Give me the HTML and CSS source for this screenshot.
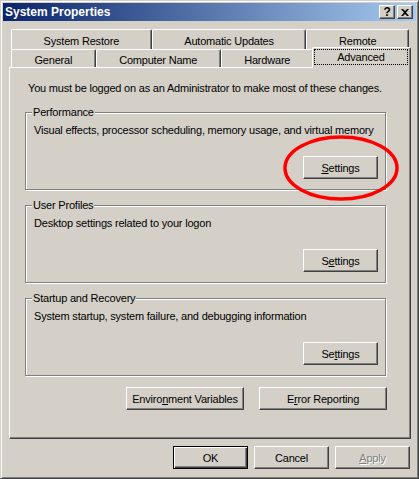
FILE: index.html
```html
<!DOCTYPE html>
<html lang="en">
<head>
    <meta charset="UTF-8">
    <title>System Properties</title>
    <link rel="stylesheet" href="styles.css">
</head>
<body>
    <div class="window">
        <div class="titlebar">
            <span class="title">System Properties</span>
            <div class="caption-buttons">
                <span class="cap-btn help">?</span>
                <span class="cap-btn close">
                    <svg width="8" height="7" viewBox="0 0 8 7"><path d="M0 0h2l2 2 2-2h2L5 3.5 8 7H6L4 5 2 7H0l3-3.5z" fill="#000"/></svg>
                </span>
            </div>
        </div>
        <div class="client">
            <div class="tabs">
                <div class="tab-row back">
                    <div class="tab">System Restore</div>
                    <div class="tab">Automatic Updates</div>
                    <div class="tab">Remote</div>
                </div>
                <div class="tab-row front">
                    <div class="tab">General</div>
                    <div class="tab">Computer Name</div>
                    <div class="tab">Hardware</div>
                    <div class="tab selected"><span class="focus">Advanced</span></div>
                </div>
            </div>
            <div class="panel">
                <p class="intro">You must be logged on as an Administrator to make most of these changes.</p>
                <fieldset class="group">
                    <legend>Performance</legend>
                    <p>Visual effects, processor scheduling, memory usage, and virtual memory</p>
                    <div class="group-actions">
                        <button type="button"><u>S</u>ettings</button>
                    </div>
                </fieldset>
                <fieldset class="group">
                    <legend>User Profiles</legend>
                    <p>Desktop settings related to your logon</p>
                    <div class="group-actions">
                        <button type="button">S<u>e</u>ttings</button>
                    </div>
                </fieldset>
                <fieldset class="group">
                    <legend>Startup and Recovery</legend>
                    <p>System startup, system failure, and debugging information</p>
                    <div class="group-actions">
                        <button type="button">Se<u>t</u>tings</button>
                    </div>
                </fieldset>
                <div class="panel-actions">
                    <button type="button" class="wide">Enviro<u>n</u>ment Variables</button>
                    <button type="button" class="wider">E<u>r</u>ror Reporting</button>
                </div>
            </div>
            <div class="dialog-actions">
                <button type="button" class="default">OK</button>
                <button type="button">Cancel</button>
                <button type="button" class="disabled"><u>A</u>pply</button>
            </div>
        </div>
        <svg class="highlight" width="120" height="70" viewBox="0 0 120 70">
            <ellipse cx="59" cy="34" rx="56" ry="31" fill="none" stroke="#ff0000" stroke-width="3.5"/>
        </svg>
    </div>
</body>
</html>
```

FILE: styles.css
```css
* {
    --face: #D4D0C8;
    --shadow: #808080;
    --dark: #404040;
    --light: #FFFFFF;
}
body{
    margin: 0;
    background-color: var(--face);
    font-family: "Liberation Sans", Arial, sans-serif;
    font-size: 11px;
    letter-spacing: -0.2px;
    color: #000;
}
.window{
    position: relative;
    width: 419px;
    height: 479px;
    box-sizing: border-box;
    border: 1px solid;
    border-color: var(--face) var(--dark) var(--dark) var(--face);
    box-shadow: inset 1px 1px 0 var(--light), inset -1px -1px 0 var(--shadow);
    padding: 2px;
    background-color: var(--face);
}
.titlebar{
    height: 18px;
    display: flex;
    align-items: center;
    justify-content: space-between;
    padding: 0 3px 0 2px;
    background: linear-gradient(to right, #0A246A, #A6CAF0);
}
.title{
    color: #fff;
    font-weight: bold;
    font-size: 12px;
    letter-spacing: 0;
}
.caption-buttons{
    display: flex;
    gap: 2px;
}
.cap-btn{
    width: 16px;
    height: 14px;
    box-sizing: border-box;
    display: flex;
    align-items: center;
    justify-content: center;
    background-color: var(--face);
    border: 1px solid;
    border-color: var(--light) var(--dark) var(--dark) var(--light);
    box-shadow: inset -1px -1px 0 var(--shadow);
    font-weight: bold;
    font-size: 12px;
    line-height: 12px;
    &.close svg{
        margin-left: -1px;
    }
}
.client{
    padding: 8px 0 0 6px;
}
.tabs{
    width: 398px;
    padding: 0 2px;
}
.tab-row{
    display: flex;
}
.tab{
    flex: 1 1 auto;
    text-align: center;
    background-color: var(--face);
    border-top: 1px solid var(--light);
    border-left: 1px solid var(--light);
    border-right: 1px solid var(--dark);
    border-radius: 2px 2px 0 0;
    box-shadow: inset -1px 0 0 var(--shadow);
    box-sizing: border-box;
    white-space: nowrap;
}
.back .tab{
    height: 20px;
    line-height: 14px;
    padding-top: 4px;
}
.front .tab{
    height: 18px;
    line-height: 14px;
    padding-top: 3px;
}
.front .tab.selected{
    position: relative;
    z-index: 1;
    height: 21px;
    margin: -2px -2px -1px -2px;
    padding: 1px 2px 0 1px;
}
.focus{
    display: block;
    height: 16px;
    box-sizing: border-box;
    border: 1px dotted #000;
    line-height: 14px;
}
.panel{
    width: 402px;
    height: 372px;
    box-sizing: border-box;
    border: 1px solid;
    border-color: var(--light) var(--dark) var(--dark) var(--light);
    box-shadow: inset -1px -1px 0 var(--shadow);
    padding: 13px 24px 0 15px;
}
p{
    margin: 0;
    line-height: 14px;
    white-space: nowrap;
}
.intro{
    padding-left: 3px;
}
.group{
    margin: 10px 0 0 0;
    padding: 4px 7px 10px 8px;
    border: 1px solid var(--shadow);
    box-shadow: inset 1px 1px 0 var(--light), 1px 1px 0 var(--light);
    & + .group{
        margin-top: 8px;
    }
    & legend{
        margin-left: -2px;
        padding: 0 1px;
        line-height: 14px;
        background-color: var(--face);
    }
}
.group-actions{
    display: flex;
    justify-content: flex-end;
    margin-top: 19px;
}
.panel-actions{
    display: flex;
    justify-content: flex-end;
    gap: 15px;
    margin: 11px -1px 0 0;
}
.dialog-actions{
    width: 401px;
    display: flex;
    justify-content: flex-end;
    gap: 6px;
    margin-top: 7px;
}
button{
    width: 75px;
    height: 23px;
    box-sizing: border-box;
    margin: 0;
    padding: 0;
    font-family: inherit;
    font-size: 11px;
    letter-spacing: inherit;
    color: #000;
    background-color: var(--face);
    border: 1px solid;
    border-color: var(--light) var(--dark) var(--dark) var(--light);
    box-shadow: inset -1px -1px 0 var(--shadow);
    border-radius: 0;
    &.wide{
        width: 118px;
    }
    &.wider{
        width: 128px;
    }
    &.default{
        border: 1px solid #000;
        box-shadow: inset 1px 1px 0 var(--light), inset -1px -1px 0 var(--dark), inset -2px -2px 0 var(--shadow);
    }
    &.disabled{
        color: var(--shadow);
        text-shadow: 1px 1px 0 var(--light);
    }
}
.highlight{
    position: absolute;
    left: 281px;
    top: 133px;
}
```
